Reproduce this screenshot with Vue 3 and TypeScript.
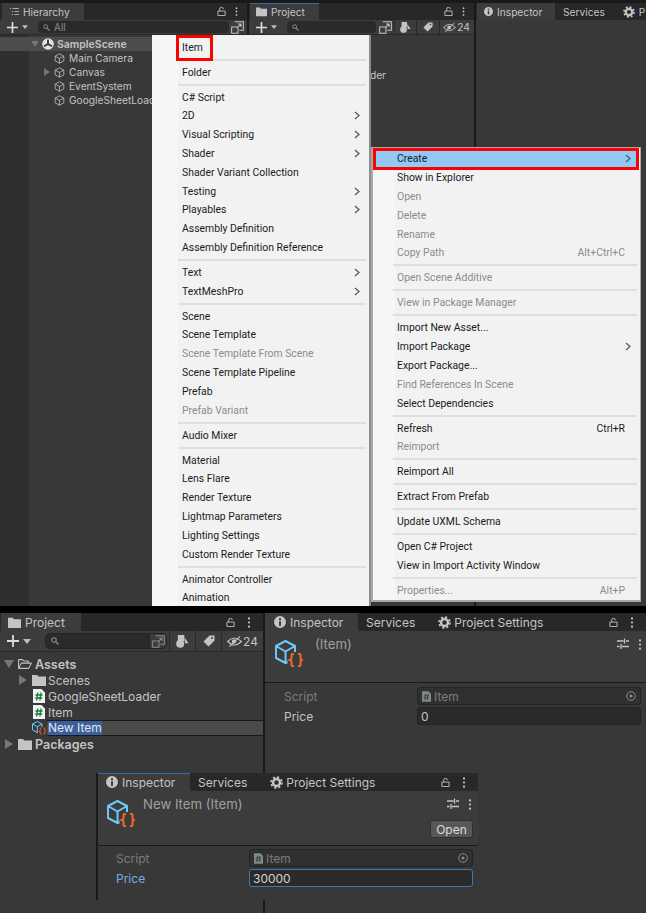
<template>
  <div class="page">
    <svg class="defs" aria-hidden="true">
      <symbol id="cube" viewBox="0 0 28 28">
        <path d="M20 12V6L10.500 1 1 6v12l9.500 5 2-1M1 6l9.500 5.500L20 6M10.500 11.500V23" fill="none" stroke="#6cc8f8" stroke-width="2" stroke-linejoin="round" />
        <path d="M19 14h-1.500q-1 0-1 1v3.500q0 1-1.800 1.500 1.800.5 1.800 1.500V25q0 1 1 1H19M23 14h1.500q1 0 1 1v3.500q0 1 1.800 1.500-1.800.5-1.800 1.500V25q0 1-1 1H23" fill="none" stroke="#f2672e" stroke-width="2" />
      </symbol>
      <symbol id="go" viewBox="0 0 14 14">
        <path d="M7 1l5.500 3v6L7 13l-5.500-3V4zM1.500 4L7 7l5.500-3M7 7v6" fill="none" stroke="currentColor" stroke-width="1" stroke-linejoin="round" />
      </symbol>
      <symbol id="list" viewBox="0 0 10 8">
        <path d="M0 .5h1.500M3 .5h7M2 4h1.500M5 4h5M2 7.500h1.500M5 7.500h5" fill="none" stroke="currentColor" stroke-width="1" />
      </symbol>
      <symbol id="lock" viewBox="0 0 10 10">
        <path d="M1 4.500h8v5H1zM3 4.500V2.300a2 2 0 0 1 4 0" fill="none" stroke="currentColor" stroke-width="1" />
      </symbol>
      <symbol id="dots" viewBox="0 0 4 12">
        <circle cx="2" cy="1.500" r="1.200" fill="currentColor" />
        <circle cx="2" cy="6" r="1.200" fill="currentColor" />
        <circle cx="2" cy="10.500" r="1.200" fill="currentColor" />
      </symbol>
      <symbol id="tune" viewBox="0 0 12 12">
        <path d="M0 3h6.500M9 3h3M0 8.500h2.500M5 8.500h7M7.500 .5v5M4 6v5" fill="none" stroke="currentColor" stroke-width="1.300" />
      </symbol>
      <symbol id="gear" viewBox="0 0 14 14">
        <circle cx="7" cy="7" r="3.700" fill="none" stroke="currentColor" stroke-width="2.600" />
        <circle cx="7" cy="7" r="5.800" fill="none" stroke="currentColor" stroke-width="2" stroke-dasharray="2.300 2.250" />
      </symbol>
      <symbol id="info" viewBox="0 0 12 12">
        <path d="M6 0a6 6 0 1 0 0 12A6 6 0 0 0 6 0zM5 2.200h2v2H5zM5 5.200h2v4.600H5z" fill="currentColor" fill-rule="evenodd" />
      </symbol>
      <symbol id="folder" viewBox="0 0 14 12">
        <path d="M0 1h5l1.500 1.500H14V12H0z" fill="currentColor" />
      </symbol>
      <symbol id="folder-open" viewBox="0 0 16 12">
        <path d="M.7 11V1h4.500l1.500 1.500h5V5M.7 11l3-6h11.500l-3 6z" fill="none" stroke="currentColor" stroke-width="1.200" stroke-linejoin="round" />
      </symbol>
      <symbol id="script" viewBox="0 0 12 14">
        <path d="M0 0h8.500L12 3.500V14H0z" fill="#f2f2f2" />
        <path d="M4.800 3.500L3.700 11.500M8 3.500L6.900 11.500M2.400 6H9.500M2.200 9H9.300" fill="none" stroke="#1d7a37" stroke-width="1.300" />
      </symbol>
      <symbol id="search" viewBox="0 0 8 8">
        <circle cx="3" cy="3" r="2.200" fill="none" stroke="currentColor" stroke-width="1.100" />
        <path d="M4.600 4.600L7.500 7.500" stroke="currentColor" stroke-width="1.400" />
      </symbol>
      <symbol id="picker" viewBox="0 0 14 14">
        <path d="M4 .7h9.300V10H9M.7 6.500h6.800v6.800H.7zM6.500 7.500l4-4M7.500 3.200h3.300v3.300" fill="none" stroke="currentColor" stroke-width="1.100" />
      </symbol>
      <symbol id="shapes" viewBox="0 0 14 14">
        <path d="M2 0h7v6.500H2zM9.500 3l4 6h-4z" fill="currentColor" />
        <circle cx="4.500" cy="9.500" r="4.300" fill="currentColor" />
      </symbol>
      <symbol id="tag" viewBox="0 0 12 12">
        <path d="M6.500.5h5v5l-6 6-5-5zM9 2a1 1 0 1 0 0 2 1 1 0 0 0 0-2z" fill="currentColor" fill-rule="evenodd" />
      </symbol>
      <symbol id="eye" viewBox="0 0 16 12">
        <path d="M.7 6Q8-1.500 15.300 6 8 13.500.7 6zM2.500 11.500L14 .5" fill="none" stroke="currentColor" stroke-width="1.200" />
        <circle cx="7.500" cy="6" r="2.300" fill="currentColor" />
      </symbol>
      <symbol id="plus" viewBox="0 0 12 12">
        <path d="M6 0v12M0 6h12" stroke="currentColor" stroke-width="1.800" />
      </symbol>
      <symbol id="caret" viewBox="0 0 8 5">
        <path d="M0 0h8L4 5z" fill="currentColor" />
      </symbol>
      <symbol id="tri" viewBox="0 0 8 10">
        <path d="M0 0l8 5-8 5z" fill="currentColor" />
      </symbol>
      <symbol id="tri-down" viewBox="0 0 10 8">
        <path d="M0 0h10L5 8z" fill="currentColor" />
      </symbol>
      <symbol id="target" viewBox="0 0 10 10">
        <circle cx="5" cy="5" r="4.300" fill="none" stroke="currentColor" stroke-width="1" />
        <circle cx="5" cy="5" r="1.600" fill="currentColor" />
      </symbol>
      <symbol id="scene" viewBox="0 0 12 12">
        <circle cx="6" cy="6" r="5.800" fill="#e4e4e4" />
        <path d="M6 6V1.500M6 6l4 2.300M6 6L2 8.300" stroke="#333" stroke-width="1.800" />
      </symbol>
      <symbol id="chev" viewBox="0 0 6 9">
        <path d="M1 1l4 3.500L1 8" fill="none" stroke="currentColor" stroke-width="1.200" />
      </symbol>
    </svg>

    <!-- editor with both context menus open -->
    <section class="editor">
      <div class="pane hierarchy">
        <div class="tabbar">
          <div class="tab on hier-tab">
            <svg class="list-ic"><use href="#list" /></svg>
            Hierarchy
          </div>
          <div class="tools">
            <svg class="ic9"><use href="#lock" /></svg>
            <svg class="dots"><use href="#dots" /></svg>
          </div>
        </div>
        <div class="bar">
          <svg class="plus"><use href="#plus" /></svg>
          <svg class="caret"><use href="#caret" /></svg>
          <div class="search hier-search">
            <svg class="ic7"><use href="#search" /></svg>
            <span>All</span>
          </div>
          <svg class="ic13"><use href="#picker" /></svg>
        </div>
        <div class="hier-body">
          <div class="scene-row">
            <svg class="arrow-d"><use href="#tri-down" /></svg>
            <svg class="ic12"><use href="#scene" /></svg>
            SampleScene
          </div>
          <div v-for="go in gameObjects" :key="go" class="go-row">
            <svg v-if="go === 'Canvas'" class="arrow-r"><use href="#tri" /></svg>
            <svg class="ic11"><use href="#go" /></svg>
            {{ go }}
          </div>
        </div>
      </div>

      <div class="pane project-top">
        <div class="tabbar">
          <div class="tab on blue proj-tab">
            <svg class="ic11"><use href="#folder" /></svg>
            Project
          </div>
          <div class="tools">
            <svg class="ic9"><use href="#lock" /></svg>
            <svg class="dots"><use href="#dots" /></svg>
          </div>
        </div>
        <div class="bar">
          <svg class="plus"><use href="#plus" /></svg>
          <svg class="caret"><use href="#caret" /></svg>
          <div class="search proj-search">
            <svg class="ic7"><use href="#search" /></svg>
          </div>
          <svg class="ic13"><use href="#picker" /></svg>
          <div class="bar-btn top-b1"><svg class="ic11"><use href="#shapes" /></svg></div>
          <div class="bar-btn top-b2"><svg class="ic10"><use href="#tag" /></svg></div>
          <div class="bar-btn top-b3"><svg class="ic13"><use href="#eye" /></svg>24</div>
        </div>
        <div class="hidden-row">GoogleSheetLoader</div>
      </div>

      <div class="pane insp-top">
        <div class="tabbar">
          <div class="tab on insp-tab-top">
            <svg class="ic9"><use href="#info" /></svg>
            Inspector
          </div>
          <div class="tab top-services">Services</div>
          <div class="tab top-settings">
            <svg class="ic12"><use href="#gear" /></svg>
            P
          </div>
        </div>
      </div>

      <div class="menu menu-a">
        <div class="red-mark"></div>
        <template v-for="(m, i) in createMenu" :key="i">
          <div v-if="m.sep" class="sep"></div>
          <div v-else class="row" :class="{ off: m.off }">
            <span class="label">{{ m.label }}</span>
            <svg v-if="m.sub" class="chev"><use href="#chev" /></svg>
          </div>
        </template>
      </div>

      <div class="menu menu-b">
        <template v-for="(m, i) in assetMenu" :key="i">
          <div v-if="m.sep" class="sep"></div>
          <div v-else class="row" :class="{ off: m.off, hot: m.label === 'Create' }">
            <span class="label">{{ m.label }}</span>
            <span v-if="m.key" class="shortcut">{{ m.key }}</span>
            <svg v-if="m.sub" class="chev"><use href="#chev" /></svg>
          </div>
        </template>
      </div>
    </section>

    <!-- project + inspector after creating the asset -->
    <section class="second">
      <div class="project">
        <div class="tabbar big">
          <div class="tab on project-tab">
            <svg class="ic13"><use href="#folder" /></svg>
            Project
          </div>
          <div class="tools big-tools">
            <svg class="lock-big"><use href="#lock" /></svg>
            <svg class="dots-big"><use href="#dots" /></svg>
          </div>
        </div>
        <div class="bar big-bar">
          <svg class="plus-big"><use href="#plus" /></svg>
          <svg class="caret-big"><use href="#caret" /></svg>
          <div class="search big-search">
            <svg class="ic8"><use href="#search" /></svg>
            <div class="search-btn"><svg class="ic13"><use href="#picker" /></svg></div>
          </div>
          <div class="bar-btn b1"><svg class="ic13"><use href="#shapes" /></svg></div>
          <div class="bar-btn b2"><svg class="ic12"><use href="#tag" /></svg></div>
          <div class="bar-btn b3"><svg class="ic15"><use href="#eye" /></svg>24</div>
        </div>
        <div class="tree">
          <div class="tree-row root">
            <svg class="arrow-d big-arrow"><use href="#tri-down" /></svg>
            <svg class="tree-ic"><use href="#folder-open" /></svg>
            <b>Assets</b>
          </div>
          <div class="tree-row child">
            <svg class="arrow-r big-arrow"><use href="#tri" /></svg>
            <svg class="tree-ic"><use href="#folder" /></svg>
            Scenes
          </div>
          <div class="tree-row child">
            <span class="no-arrow"></span>
            <svg class="tree-ic"><use href="#script" /></svg>
            GoogleSheetLoader
          </div>
          <div class="tree-row child">
            <span class="no-arrow"></span>
            <svg class="tree-ic"><use href="#script" /></svg>
            Item
          </div>
          <div class="tree-row child editing">
            <span class="no-arrow"></span>
            <svg class="tree-ic"><use href="#cube" /></svg>
            <div class="rename"><span class="selected">New Item</span></div>
          </div>
          <div class="tree-row root">
            <svg class="arrow-r big-arrow"><use href="#tri" /></svg>
            <svg class="tree-ic"><use href="#folder" /></svg>
            <b>Packages</b>
          </div>
        </div>
      </div>

      <div class="inspector">
        <div class="tabbar big">
          <div class="tab on insp-tab">
            <svg class="ic12"><use href="#info" /></svg>
            Inspector
          </div>
          <div class="tab services">Services</div>
          <div class="tab settings">
            <svg class="ic13"><use href="#gear" /></svg>
            Project Settings
          </div>
          <div class="tools big-tools">
            <svg class="lock-big"><use href="#lock" /></svg>
            <svg class="dots-big"><use href="#dots" /></svg>
          </div>
        </div>
        <div class="head">
          <svg class="cube-big"><use href="#cube" /></svg>
          <div class="title">(Item)</div>
          <div class="head-tools">
            <svg class="ic12"><use href="#tune" /></svg>
            <svg class="dots-big"><use href="#dots" /></svg>
          </div>
        </div>
        <div class="fields">
          <span class="field-label dim">Script</span>
          <div class="field ref">
            <svg class="ref-ic"><use href="#script" /></svg>
            Item
            <svg class="target"><use href="#target" /></svg>
          </div>
          <span class="field-label">Price</span>
          <div class="field">0</div>
        </div>
      </div>
    </section>

    <!-- inspector with the price typed in -->
    <section class="third">
      <div class="tabbar big">
        <div class="tab on blue insp-tab">
          <svg class="ic12"><use href="#info" /></svg>
          Inspector
        </div>
        <div class="tab services">Services</div>
        <div class="tab settings">
          <svg class="ic13"><use href="#gear" /></svg>
          Project Settings
        </div>
        <div class="tools big-tools">
          <svg class="lock-big"><use href="#lock" /></svg>
          <svg class="dots-big"><use href="#dots" /></svg>
        </div>
      </div>
      <div class="head head-open">
        <svg class="cube-big"><use href="#cube" /></svg>
        <div class="title">New Item (Item)</div>
        <div class="head-tools">
          <svg class="ic12"><use href="#tune" /></svg>
          <svg class="dots-big"><use href="#dots" /></svg>
        </div>
        <button class="open-btn">Open</button>
      </div>
      <div class="fields">
        <span class="field-label dim">Script</span>
        <div class="field ref">
          <svg class="ref-ic"><use href="#script" /></svg>
          Item
          <svg class="target"><use href="#target" /></svg>
        </div>
        <span class="field-label active">Price</span>
        <div class="field focus">30000</div>
      </div>
    </section>

    <div class="tail"></div>
  </div>
</template>

<script setup lang="ts">
interface MenuItem {
  label?: string
  sep?: boolean
  off?: boolean
  sub?: boolean
  key?: string
}

const gameObjects = ['Main Camera', 'Canvas', 'EventSystem', 'GoogleSheetLoader']

const sep: MenuItem = { sep: true }

const createMenu: MenuItem[] = [
  { label: 'Item' },
  sep,
  { label: 'Folder' },
  sep,
  { label: 'C# Script' },
  { label: '2D', sub: true },
  { label: 'Visual Scripting', sub: true },
  { label: 'Shader', sub: true },
  { label: 'Shader Variant Collection' },
  { label: 'Testing', sub: true },
  { label: 'Playables', sub: true },
  { label: 'Assembly Definition' },
  { label: 'Assembly Definition Reference' },
  sep,
  { label: 'Text', sub: true },
  { label: 'TextMeshPro', sub: true },
  sep,
  { label: 'Scene' },
  { label: 'Scene Template' },
  { label: 'Scene Template From Scene', off: true },
  { label: 'Scene Template Pipeline' },
  { label: 'Prefab' },
  { label: 'Prefab Variant', off: true },
  sep,
  { label: 'Audio Mixer' },
  sep,
  { label: 'Material' },
  { label: 'Lens Flare' },
  { label: 'Render Texture' },
  { label: 'Lightmap Parameters' },
  { label: 'Lighting Settings' },
  { label: 'Custom Render Texture' },
  sep,
  { label: 'Animator Controller' },
  { label: 'Animation' }
]

const assetMenu: MenuItem[] = [
  { label: 'Create', sub: true },
  { label: 'Show in Explorer' },
  { label: 'Open', off: true },
  { label: 'Delete', off: true },
  { label: 'Rename', off: true },
  { label: 'Copy Path', off: true, key: 'Alt+Ctrl+C' },
  sep,
  { label: 'Open Scene Additive', off: true },
  sep,
  { label: 'View in Package Manager', off: true },
  sep,
  { label: 'Import New Asset...' },
  { label: 'Import Package', sub: true },
  { label: 'Export Package...' },
  { label: 'Find References In Scene', off: true },
  { label: 'Select Dependencies' },
  sep,
  { label: 'Refresh', key: 'Ctrl+R' },
  { label: 'Reimport', off: true },
  sep,
  { label: 'Reimport All' },
  sep,
  { label: 'Extract From Prefab' },
  sep,
  { label: 'Update UXML Schema' },
  sep,
  { label: 'Open C# Project' },
  { label: 'View in Import Activity Window' },
  sep,
  { label: 'Properties...', off: true, key: 'Alt+P' }
]
</script>

<style>
body {
  margin: 0;
  background: #383838;
}
</style>

<style scoped>
.page {
  width: 646px;
  height: 913px;
  overflow: hidden;
  background: #383838;
  color: #c4c4c4;
  font-family: Inter, "Noto Sans", sans-serif;
  font-size: 12px;
}

.defs {
  position: absolute;
  width: 0;
  height: 0;
}

svg {
  flex: none;
  display: block;
}

.ic7 { width: 7px; height: 7px; }
.ic8 { width: 8px; height: 8px; }
.ic9 { width: 9px; height: 9px; }
.ic10 { width: 10px; height: 10px; }
.ic11 { width: 11px; height: 11px; }
.ic12 { width: 12px; height: 12px; }
.ic13 { width: 13px; height: 13px; }
.ic15 { width: 15px; height: 13px; }
.list-ic { width: 9px; height: 7px; }
.lock-big { width: 9px; height: 9px; }

/* top screenshot */
.editor {
  position: relative;
  height: 603px;
  padding-top: 3px;
  display: flex;
  gap: 2px;
  background: #191919;
  border-bottom: 7px solid #000;
  font-size: 10.200px;
}

.pane {
  background: #383838;
  display: flex;
  flex-direction: column;
}

.hierarchy { width: 247px; }
.project-top { width: 225px; }
.insp-top { flex: 1; min-width: 0; overflow: hidden; }

.tabbar {
  height: 17px;
  display: flex;
  align-items: stretch;
  background: #282828;
}

.tabbar.big {
  height: 18px;
  font-size: 12px;
}

.tab {
  flex: none;
  display: flex;
  align-items: center;
  gap: 4px;
  white-space: nowrap;
}

.tab.on {
  background: #3c3c3c;
}

.tab.blue {
  box-shadow: inset 0 1px 0 #2e6da8;
}

.hier-tab { width: 82px; margin-left: 2px; padding-left: 8px; box-sizing: border-box; }
.proj-tab { width: 69px; margin-left: 1px; padding-left: 6px; box-sizing: border-box; }
.insp-tab-top { width: 78px; margin-left: 1px; padding-left: 7px; box-sizing: border-box; }
.top-services { margin-left: 8px; }
.top-settings { margin-left: 18px; }

.tools {
  margin-left: auto;
  display: flex;
  align-items: center;
  gap: 9px;
  padding-right: 9px;
}

.big-tools {
  gap: 12px;
  padding-right: 12px;
}

.dots { width: 3px; height: 9px; }
.dots-big { width: 4px; height: 11px; }

.bar {
  height: 15px;
  box-sizing: border-box;
  display: flex;
  align-items: center;
  background: #3c3c3c;
  border-bottom: 1px solid #2a2a2a;
}

.plus { width: 11px; height: 11px; margin-left: 7px; color: #ddd; }
.caret { width: 6px; height: 4px; margin-left: 4px; color: #bbb; }

.search {
  display: flex;
  align-items: center;
  height: 12px;
  box-sizing: border-box;
  padding-left: 5px;
  gap: 4px;
  background: #2a2a2a;
  border-radius: 4px;
  color: #8a8a8a;
  font-size: 10px;
}

.hier-search { width: 191px; margin: 0 2px 0 10px; }
.proj-search { width: 89px; margin: 0 3px 0 10px; }

.bar-btn {
  height: 100%;
  display: flex;
  align-items: center;
  justify-content: center;
  gap: 1px;
  box-sizing: border-box;
  border-left: 1px solid #2a2a2a;
}

.top-b1 { width: 22px; margin-left: 2px; }
.top-b2 { width: 23px; }
.top-b3 { width: 34px; }

.hier-body {
  flex: 1;
  padding-top: 2px;
  background: linear-gradient(90deg, #2f2f2f 29px, #383838 29px);
}

.scene-row,
.go-row {
  position: relative;
  height: 14px;
  display: flex;
  align-items: center;
  white-space: nowrap;
  gap: 4px;
}

.scene-row {
  padding-left: 31px;
  gap: 3px;
  background: #4c4c4c;
  font-weight: 600;
  font-size: 10.500px;
}

.go-row {
  padding-left: 54px;
}

.arrow-d { width: 8px; height: 6px; color: #777; }
.arrow-r { width: 6px; height: 8px; color: #777; }

.go-row .arrow-r {
  position: absolute;
  left: 44px;
  top: 3px;
}

.hidden-row {
  margin: 33px 0 0 41px;
  line-height: 14px;
  white-space: nowrap;
}

/* context menus */
.menu {
  position: absolute;
  box-sizing: border-box;
  background: #f2f2f2;
  color: #1b1b1b;
  font-family: Roboto, "Liberation Sans", sans-serif;
  font-size: 10.400px;
}

.menu-a {
  left: 152px;
  top: 35px;
  width: 219px;
  height: 571px;
  overflow: hidden;
  padding-top: 2.700px;
  border-right: 2px solid #8c8c8c;
  background: linear-gradient(90deg, #f6f6f6 26px, #f2f2f2 26px);
  --indent: 30px;
  --sep-left: 26px;
}

.menu-b {
  left: 371px;
  top: 147px;
  width: 270px;
  height: 455px;
  padding-top: 1.500px;
  border-left: 2px solid #a8a8a8;
  border-right: 1px solid #a8a8a8;
  border-bottom: 2px solid #a8a8a8;
  border-top: 1px solid #a8a8a8;
  background: linear-gradient(90deg, #f6f6f6 22px, #f2f2f2 22px);
  --indent: 24px;
  --sep-left: 20px;
}

.row {
  height: 18.800px;
  display: flex;
  align-items: center;
  padding: 0 9px 0 var(--indent);
  white-space: nowrap;
}

.label {
  flex: 1;
}

.row.off {
  color: #8c8c8c;
}

.shortcut {
  margin-right: 6px;
}

.chev {
  width: 6px;
  height: 9px;
  color: #555;
}

.row.hot {
  margin: 0 3px 0 2px;
  padding: 0 6px 0 22px;
  background: #90c8f6;
  outline: 3px solid #ff0000;
  outline-offset: -1px;
  color: #1b1b1b;
}

.sep {
  height: 2px;
  margin: 2.100px 3px 2.100px var(--sep-left);
  background: #dedede;
}

.red-mark {
  position: absolute;
  left: 24px;
  top: 0;
  width: 37px;
  height: 26px;
  box-sizing: border-box;
  border: 3px solid #ff0000;
}

/* second shot */
.second {
  height: 160px;
  display: flex;
}

.project {
  width: 263px;
  border-right: 2px solid #191919;
}

.project-tab {
  width: 80px;
  margin-left: 1px;
  padding-left: 7px;
  box-sizing: border-box;
}

.big-bar {
  height: 21px;
}

.plus-big { width: 12px; height: 12px; margin-left: 7px; color: #ddd; }
.caret-big { width: 8px; height: 5px; margin-left: 4px; color: #bbb; }

.big-search {
  position: relative;
  width: 122px;
  height: 16px;
  margin: 0 2px 0 14px;
  border: 1px solid #242424;
  border-radius: 5px;
}

.search-btn {
  position: absolute;
  right: 0;
  top: 0;
  bottom: 0;
  width: 16px;
  display: flex;
  align-items: center;
  justify-content: center;
  background: #3c3c3c;
  border-left: 1px solid #242424;
  border-radius: 0 4px 4px 0;
}

.b1 { width: 26px; }
.b2 { width: 26px; }
.b3 { width: 42px; font-size: 12px; }

.tree {
  padding-top: 4px;
}

.tree-row {
  height: 16px;
  display: flex;
  align-items: center;
  white-space: nowrap;
}

.tree-row.root { padding-left: 4px; }
.tree-row.child { padding-left: 18px; }

.big-arrow {
  width: 10px;
  height: 8px;
  margin-right: 4px;
}

.arrow-r.big-arrow {
  width: 8px;
  height: 10px;
  margin: 0 5px 0 1px;
}

.no-arrow {
  width: 14px;
  flex: none;
}

.tree-ic {
  width: 14px;
  height: 14px;
  margin-right: 2px;
}

.root .tree-ic {
  width: 14px;
  height: 12px;
  margin-right: 3px;
}

.root b {
  font-weight: 600;
  font-size: 12.500px;
}

.rename {
  flex: 1;
  height: 16px;
  box-sizing: border-box;
  margin-left: -1px;
  padding-left: 1px;
  border-top: 1px solid #191919;
  border-bottom: 1px solid #191919;
  background: #4a4a4a;
  line-height: 14px;
}

.selected {
  display: inline-block;
  background: #3a5f9e;
  color: #e6e6e6;
}

.inspector {
  flex: 1;
}

.insp-tab {
  width: 92px;
  padding-left: 8px;
  box-sizing: border-box;
}

.inspector .insp-tab {
  width: 93px;
  padding-left: 9px;
}

.services { margin-left: 8px; }
.settings { margin-left: 23px; gap: 3px; }

.head {
  position: relative;
  height: 52px;
  display: flex;
  align-items: flex-start;
  padding: 9px 0 0 10px;
  box-sizing: border-box;
  background: #3c3c3c;
  border-bottom: 1px solid #191919;
}

.cube-big {
  width: 28px;
  height: 28px;
  margin-right: 12px;
}

.title {
  margin-top: -3px;
  line-height: 14px;
  font-size: 13.200px;
  color: #a0a0a0;
}

.head-tools {
  margin-left: auto;
  display: flex;
  align-items: center;
  gap: 9px;
  padding: 0 4px 0 0;
  margin-top: -2px;
}

.fields {
  display: grid;
  grid-template-columns: 133px 224px;
  grid-auto-rows: 18px;
  row-gap: 2px;
  align-items: center;
  padding: 4px 0 0 19px;
}

.field-label.dim {
  color: #7c7c7c;
}

.field-label.active {
  color: #7aaae6;
}

.field {
  position: relative;
  height: 18px;
  display: flex;
  align-items: center;
  gap: 3px;
  box-sizing: border-box;
  padding-left: 3px;
  background: #2a2a2a;
  border: 1px solid #242424;
  border-radius: 3px;
}

.field.ref {
  padding-left: 4px;
  background: #303030;
  color: #7c7c7c;
}

.ref-ic {
  width: 9px;
  height: 11px;
  opacity: 0.45;
}

.target {
  position: absolute;
  right: 4px;
  top: 3px;
  width: 10px;
  height: 10px;
  color: #8a8a8a;
}

.field.focus {
  border-color: #3a79bb;
  color: #d2d2d2;
}

/* third shot */
.third {
  width: 380px;
  height: 127px;
  margin-left: 96px;
  border-left: 2px solid #191919;
}

.head-open {
  height: 55px;
  padding-left: 9px;
}

.head-open .cube-big {
  margin-right: 8px;
}

.head-open .head-tools {
  padding-right: 6px;
}

.open-btn {
  position: absolute;
  right: 5px;
  top: 29px;
  width: 43px;
  height: 18px;
  padding: 0;
  background: #585858;
  border: 1px solid #303030;
  border-radius: 3px;
  color: #dcdcdc;
  font: 12px Inter, sans-serif;
}

.third .fields {
  padding: 3px 0 0 18px;
}

.tail {
  width: 2px;
  height: 13px;
  margin-left: 263px;
  background: #191919;
}
</style>
